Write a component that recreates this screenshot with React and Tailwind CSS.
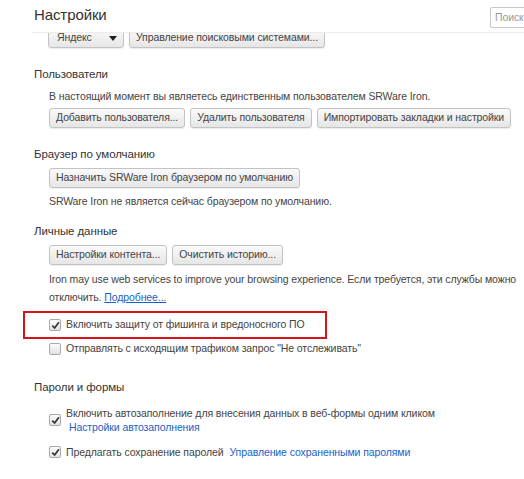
import React from "react";

function Btn({ children, className = "" }) {
  return (
    <div
      className={
        "h-[20px] px-[6px] flex items-center rounded-[3px] border border-[#c3c3c3] bg-gradient-to-b from-[#fafafa] to-[#e6e6e6] text-[#444] text-[10.5px] tracking-[-0.1px] whitespace-nowrap shadow-[0_1px_1px_rgba(0,0,0,0.08)] " +
        className
      }
    >
      {children}
    </div>
  );
}

function Check({ checked }) {
  return (
    <div className="w-[12px] h-[12px] shrink-0 rounded-[2px] border border-[#a9a9a9] bg-gradient-to-b from-[#fdfdfd] to-[#e2e2e2] flex items-center justify-center">
      {checked && (
        <svg width="9" height="9" viewBox="0 0 10 10">
          <path d="M1.5 5.2 L4 7.8 L8.8 1.5" fill="none" stroke="#333" strokeWidth="1.9" />
        </svg>
      )}
    </div>
  );
}

function Heading({ children, className = "" }) {
  return (
    <div className={"pl-[34px] text-[11.5px] leading-[16px] text-[#333] " + className}>{children}</div>
  );
}

export default function App() {
  return (
    <div
      className="w-[524px] h-[479px] bg-white overflow-hidden text-[#444] text-[10.5px] tracking-[-0.1px]"
      style={{ fontFamily: "'Liberation Sans', Arial, sans-serif" }}
    >
      <div className="relative z-10 bg-white h-[33px] ml-[32px] border-b border-[#ececec] flex items-start">
        <div className="mt-[5px] ml-[2px] text-[15px] leading-[20px] tracking-[-0.1px] text-[#333]">Настройки</div>
        <div className="ml-auto mt-[7px] mr-[-20px] w-[54px] h-[21px] border border-[#c8c8c8] rounded-[2px] px-[4px] text-[10.5px] leading-[19px] text-[#999]">
          Поиск
        </div>
      </div>

      <div className="mt-[-5px] pl-[48px] flex gap-[5px]">
        <Btn className="w-[76px] justify-between">
          <span className="pl-[2px]">Яндекс</span>
          <svg width="8" height="5" viewBox="0 0 8 5">
            <path d="M0 0 H8 L4 5 Z" fill="#222" />
          </svg>
        </Btn>
        <Btn>Управление поисковыми системами...</Btn>
      </div>

      <Heading className="mt-[18px]">Пользователи</Heading>
      <div className="pl-[49px] mt-[6px] leading-[16px] whitespace-nowrap">
        В настоящий момент вы являетесь единственным пользователем SRWare Iron.
      </div>
      <div className="pl-[49px] mt-[4px] flex gap-[5px]">
        <Btn>Добавить пользователя...</Btn>
        <Btn>Удалить пользователя</Btn>
        <Btn>Импортировать закладки и настройки</Btn>
      </div>

      <Heading className="mt-[18px]">Браузер по умолчанию</Heading>
      <div className="pl-[49px] mt-[6px] flex">
        <Btn>Назначить SRWare Iron браузером по умолчанию</Btn>
      </div>
      <div className="pl-[49px] mt-[5px] leading-[16px] whitespace-nowrap">
        SRWare Iron не является сейчас браузером по умолчанию.
      </div>

      <Heading className="mt-[14px]">Личные данные</Heading>
      <div className="pl-[49px] mt-[6px] flex gap-[5px]">
        <Btn>Настройки контента...</Btn>
        <Btn>Очистить историю...</Btn>
      </div>
      <div className="pl-[49px] mt-[5px] leading-[18px] whitespace-nowrap">
        <div>Iron may use web services to improve your browsing experience. Если требуется, эти службы можно</div>
        <div>
          отключить. <span className="text-[#1a5fc8] underline">Подробнее...</span>
        </div>
      </div>

      <div className="ml-[23px] mt-[5px] w-[304px] h-[28px] border-2 border-[#d6141c] flex items-center pl-[24px] gap-[5px]">
        <Check checked />
        <span className="whitespace-nowrap">Включить защиту от фишинга и вредоносного ПО</span>
      </div>
      <div className="pl-[49px] mt-[2px] h-[16px] flex items-center gap-[5px] whitespace-nowrap">
        <Check />
        <span>Отправлять с исходящим трафиком запрос "Не отслеживать"</span>
      </div>

      <Heading className="mt-[22px]">Пароли и формы</Heading>
      <div className="pl-[49px] mt-[11px] flex items-center gap-[5px] whitespace-nowrap">
        <Check checked />
        <div className="leading-[14px]">
          <div>Включить автозаполнение для внесения данных в веб-формы одним кликом</div>
          <div className="pl-[3px] text-[#1a5fc8]">Настройки автозаполнения</div>
        </div>
      </div>
      <div className="pl-[49px] mt-[10px] flex items-center gap-[5px] whitespace-nowrap leading-[16px]">
        <Check checked />
        <span>Предлагать сохранение паролей</span>
        <span className="ml-[1px] text-[#1a5fc8]">Управление сохраненными паролями</span>
      </div>
    </div>
  );
}
